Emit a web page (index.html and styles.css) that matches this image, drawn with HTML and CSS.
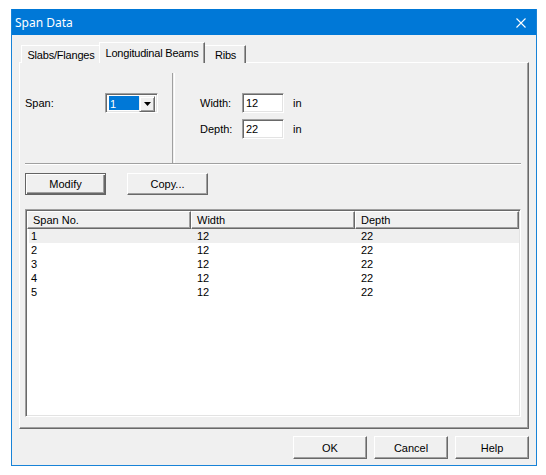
FILE: index.html
```html
<!DOCTYPE html>
<html>
<head>
<meta charset="utf-8">
<link rel="stylesheet" href="styles.css">
</head>
<body>
<div class="window">
  <div class="titlebar">
    <span class="title">Span Data</span>
    <svg class="close" width="10" height="10" viewBox="0 0 10 10"><path d="M0.5 0.5 L9.5 9.5 M9.5 0.5 L0.5 9.5" stroke="#fff" stroke-width="1.1" fill="none"/></svg>
  </div>
  <div class="client">
    <div class="tabs">
      <div class="tab tab-slabs">Slabs/Flanges</div>
      <div class="tab tab-active">Longitudinal Beams</div>
      <div class="tab tab-ribs">Ribs</div>
    </div>
    <div class="panel">
      <div class="top">
        <div class="span-group">
          <span class="lbl span-lbl">Span:</span>
          <div class="combo">
            <span class="combo-val">1</span>
            <span class="combo-btn"><svg width="7" height="4" viewBox="0 0 7 4"><polygon points="0,0 7,0 3.5,4" fill="#000"/></svg></span>
          </div>
        </div>
        <div class="vsep"></div>
        <div class="dims">
          <div class="dim-row"><span class="lbl dim-lbl">Width:</span><div class="field">12</div><span class="unit">in</span></div>
          <div class="dim-row"><span class="lbl dim-lbl">Depth:</span><div class="field">22</div><span class="unit">in</span></div>
        </div>
      </div>
      <div class="hsep"></div>
      <div class="actions">
        <div class="btn btn-default">Modify</div>
        <div class="btn">Copy...</div>
      </div>
      <div class="list">
        <div class="list-head">
          <div class="hcell">Span No.</div>
          <div class="hcell">Width</div>
          <div class="hcell hcell-last">Depth</div>
        </div>
        <div class="list-body">
          <div class="row row-sel"><span class="c1">1</span><span class="c2">12</span><span class="c3">22</span></div>
          <div class="row"><span class="c1">2</span><span class="c2">12</span><span class="c3">22</span></div>
          <div class="row"><span class="c1">3</span><span class="c2">12</span><span class="c3">22</span></div>
          <div class="row"><span class="c1">4</span><span class="c2">12</span><span class="c3">22</span></div>
          <div class="row"><span class="c1">5</span><span class="c2">12</span><span class="c3">22</span></div>
        </div>
      </div>
    </div>
    <div class="footer">
      <div class="btn btn-foot">OK</div>
      <div class="btn btn-foot">Cancel</div>
      <div class="btn btn-foot">Help</div>
    </div>
  </div>
</div>
</body>
</html>
```
FILE: styles.css
```css
html, body {
  margin: 0;
  padding: 0;
  background: #ffffff;
}
body {
  font-family: "Liberation Sans", Arial, sans-serif;
  font-size: 11px;
  color: #000;
}
.window {
  margin: 9px 0 0 11px;
  width: 526px;
  height: 457px;
  box-sizing: border-box;
  border: 1px solid #1883d7;
  display: flex;
  flex-direction: column;
  background: #f0f0f0;
}
.titlebar {
  height: 25px;
  background: #0078d7;
  display: flex;
  align-items: center;
  justify-content: space-between;
  padding: 0 10px 0 3px;
  margin-top: -1px;
  padding-top: 1px;
  box-sizing: content-box;
}
.title {
  font-family: "Noto Sans", "Liberation Sans", sans-serif;
  font-size: 12px;
  color: #fff;
  line-height: 14px;
}
.close {
  display: block;
}
.client {
  flex: 1;
  padding: 0 7px;
  display: flex;
  flex-direction: column;
}
.tabs {
  margin-top: 7px;
  height: 21px;
  margin-bottom: -1px;
  padding-left: 2px;
  display: flex;
  align-items: flex-start;
  position: relative;
  z-index: 2;
  letter-spacing: -0.2px;
}
.tab {
  box-sizing: border-box;
  height: 18px;
  margin-top: 3px;
  border-top: 1px solid #fff;
  border-left: 1px solid #fff;
  border-right: 1px solid #696969;
  box-shadow: inset -1px 0 0 #a0a0a0;
  display: flex;
  align-items: center;
  justify-content: center;
  background: #f0f0f0;
  white-space: nowrap;
}
.tab-slabs {
  width: 80px;
  padding-top: 1px;
}
.tab-active {
  width: 106px;
  height: 21px;
  margin-top: 0;
  margin-left: -2px;
  margin-right: -2px;
  position: relative;
  z-index: 3;
  padding-bottom: 1px;
}
.tab-ribs {
  width: 43px;
  padding-left: 2px;
  padding-top: 1px;
}
.panel {
  position: relative;
  z-index: 1;
  box-sizing: border-box;
  width: 510px;
  height: 367px;
  border-top: 1px solid #fff;
  border-left: 1px solid #fff;
  border-right: 1px solid #696969;
  border-bottom: 1px solid #696969;
  box-shadow: inset -1px -1px 0 #a0a0a0;
  padding: 0 7px 0 5px;
  display: flex;
  flex-direction: column;
}
.top {
  margin-top: 10px;
  height: 90px;
  display: flex;
}
.span-group {
  width: 147px;
  padding-top: 20px;
  box-sizing: border-box;
  display: flex;
  align-items: flex-start;
}
.span-lbl {
  width: 80px;
  line-height: 20px;
}
.combo {
  width: 53px;
  height: 20px;
  box-sizing: border-box;
  border-top: 1px solid #a0a0a0;
  border-left: 1px solid #a0a0a0;
  border-right: 1px solid #fff;
  border-bottom: 1px solid #fff;
  box-shadow: inset 1px 1px 0 #696969, inset -1px -1px 0 #e3e3e3;
  background: #fff;
  padding: 2px 2px 2px 3px;
  display: flex;
}
.combo-val {
  flex: 1;
  background: #0078d7;
  color: #fff;
  line-height: 16px;
  padding-left: 1px;
}
.combo-btn {
  width: 16px;
  height: 16px;
  box-sizing: border-box;
  background: #f0f0f0;
  border-top: 1px solid #f0f0f0;
  border-left: 1px solid #f0f0f0;
  border-right: 1px solid #696969;
  border-bottom: 1px solid #696969;
  box-shadow: inset 1px 1px 0 #fff, inset -1px -1px 0 #a0a0a0;
  display: flex;
  align-items: center;
  justify-content: center;
}
.combo-btn svg {
  display: block;
}
.vsep {
  width: 1px;
  border-left: 1px solid #a0a0a0;
  border-right: 1px solid #fff;
}
.dims {
  padding: 20px 0 0 25px;
  display: flex;
  flex-direction: column;
  gap: 6px;
}
.dim-row {
  display: flex;
  align-items: center;
  height: 20px;
}
.dim-lbl {
  width: 42px;
}
.field {
  width: 42px;
  height: 20px;
  box-sizing: border-box;
  border-top: 1px solid #a0a0a0;
  border-left: 1px solid #a0a0a0;
  border-right: 1px solid #fff;
  border-bottom: 1px solid #fff;
  box-shadow: inset 1px 1px 0 #696969, inset -1px -1px 0 #e3e3e3;
  background: #fff;
  padding-left: 3px;
  line-height: 18px;
}
.unit {
  margin-left: 9px;
}
.hsep {
  height: 0;
  border-top: 1px solid #a0a0a0;
  border-bottom: 1px solid #fff;
}
.actions {
  margin-top: 8px;
  display: flex;
  gap: 21px;
}
.btn {
  box-sizing: border-box;
  width: 81px;
  height: 22px;
  background: #f0f0f0;
  border-top: 1px solid #fff;
  border-left: 1px solid #fff;
  border-right: 1px solid #696969;
  border-bottom: 1px solid #696969;
  box-shadow: inset -1px -1px 0 #a0a0a0;
  display: flex;
  align-items: center;
  justify-content: center;
}
.btn-default {
  border: 1px solid #646464;
  box-shadow: inset 1px 1px 0 #fff, inset -1px -1px 0 #696969, inset -2px -2px 0 #a0a0a0;
}
.list {
  margin-top: 14px;
  height: 208px;
  box-sizing: border-box;
  border-top: 1px solid #a0a0a0;
  border-left: 1px solid #a0a0a0;
  border-right: 1px solid #fff;
  border-bottom: 1px solid #fff;
  box-shadow: inset 1px 1px 0 #696969, inset -1px -1px 0 #e3e3e3;
  background: #fff;
  padding: 1px;
  display: flex;
  flex-direction: column;
}
.list-head {
  display: flex;
  height: 18px;
}
.hcell {
  box-sizing: border-box;
  width: 164px;
  height: 18px;
  background: #f0f0f0;
  border-top: 1px solid #fff;
  border-left: 1px solid #fff;
  border-right: 1px solid #696969;
  border-bottom: 1px solid #696969;
  box-shadow: inset -1px -1px 0 #a0a0a0;
  padding-left: 5px;
  line-height: 16px;
}
.hcell-last {
  flex: 1;
}
.list-body {
  display: flex;
  flex-direction: column;
}
.row {
  display: flex;
  height: 14px;
  line-height: 14px;
}
.row-sel {
  background: #efefef;
  margin-left: 2px;
}
.row-sel .c1 {
  width: 162px;
  padding-left: 2px;
}
.c1 {
  width: 164px;
  padding-left: 4px;
  box-sizing: border-box;
}
.c2, .c3 {
  width: 164px;
  padding-left: 6px;
  box-sizing: border-box;
}
.footer {
  margin-top: 7px;
  display: flex;
  justify-content: flex-end;
  gap: 7px;
}
.btn-foot {
  width: 74px;
  height: 23px;
}
```
